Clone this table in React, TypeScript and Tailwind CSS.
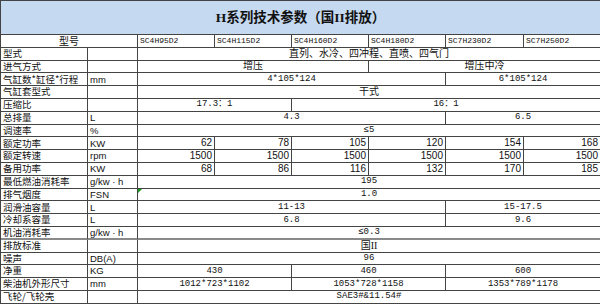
type Cell = { t: string; span: number; right?: boolean; cn?: boolean };
type Row = { label: string; unit: string; cells: Cell[]; thick?: boolean; flag?: boolean };

const MODELS = ['SC4H95D2', 'SC4H115D2', 'SC4H160D2', 'SC4H180D2', 'SC7H230D2', 'SC7H250D2'];

const each = (vals: string[]): Cell[] => vals.map((t) => ({ t, span: 1, right: true }));

const ROWS: Row[] = [
  { label: '型式', unit: '', cells: [{ t: '直列、水冷、四冲程、直喷、四气门', span: 6, cn: true }] },
  { label: '进气方式', unit: '', cells: [{ t: '增压', span: 3, cn: true }, { t: '增压中冷', span: 3, cn: true }] },
  { label: '气缸数*缸径*行程', unit: 'mm', cells: [{ t: '4*105*124', span: 4 }, { t: '6*105*124', span: 2 }] },
  { label: '气缸套型式', unit: '', cells: [{ t: '干式', span: 6, cn: true }] },
  { label: '压缩比', unit: '', cells: [{ t: '17.3：1', span: 2 }, { t: '16：1', span: 4 }] },
  { label: '总排量', unit: 'L', cells: [{ t: '4.3', span: 4 }, { t: '6.5', span: 2 }] },
  { label: '调速率', unit: '%', cells: [{ t: '≤5', span: 6 }] },
  { label: '额定功率', unit: 'KW', cells: each(['62', '78', '105', '120', '154', '168']) },
  { label: '额定转速', unit: 'rpm', cells: each(['1500', '1500', '1500', '1500', '1500', '1500']) },
  { label: '备用功率', unit: 'KW', cells: each(['68', '86', '116', '132', '170', '185']) },
  { label: '最低燃油消耗率', unit: 'g/kw · h', cells: [{ t: '195', span: 6 }] },
  { label: '排气烟度', unit: 'FSN', cells: [{ t: '1.0', span: 6 }], flag: true },
  { label: '润滑油容量', unit: 'L', cells: [{ t: '11-13', span: 4 }, { t: '15-17.5', span: 2 }] },
  { label: '冷却系容量', unit: 'L', cells: [{ t: '6.8', span: 4 }, { t: '9.6', span: 2 }] },
  { label: '机油消耗率', unit: 'g/kw · h', cells: [{ t: '≤0.3', span: 6 }], thick: true },
  { label: '排放标准', unit: '', cells: [{ t: '国II', span: 6, cn: true }] },
  { label: '噪声', unit: 'DB(A)', cells: [{ t: '96', span: 6 }] },
  { label: '净重', unit: 'KG', cells: [{ t: '430', span: 2 }, { t: '460', span: 2 }, { t: '600', span: 2 }] },
  { label: '柴油机外形尺寸', unit: 'mm', cells: [{ t: '1012*723*1102', span: 2 }, { t: '1053*728*1158', span: 2 }, { t: '1353*789*1178', span: 2 }] },
  { label: '飞轮/飞轮壳', unit: '', cells: [{ t: 'SAE3#&11.54#', span: 6 }] },
];

const SPAN: Record<number, string> = {
  1: 'col-span-1',
  2: 'col-span-2',
  3: 'col-span-3',
  4: 'col-span-4',
  6: 'col-span-6',
};

const cjk = "font-['Noto_Sans_CJK_SC',sans-serif]";
const serifCn = "font-['Liberation_Serif','Noto_Sans_CJK_SC',serif]";
const mono = "font-['Liberation_Mono','Noto_Sans_CJK_SC',monospace]";
const sans = "font-['Liberation_Sans','Noto_Sans_CJK_SC',sans-serif]";
const cell = 'flex items-center border-r border-b border-[#444] overflow-visible whitespace-nowrap leading-none';

export default function App() {
  return (
    <div className="w-[600px] h-[304px] overflow-hidden bg-white text-[#111]">
      <div className="grid grid-cols-[87px_50px_77px_77px_77px_77px_78px_77px] grid-rows-[34px_repeat(21,12.8px)] border-l border-t border-[#444]">
        <div className={`col-span-8 ${cell} justify-center bg-[#c5d9f1] ${serifCn} text-[13.5px] font-bold`}>
          H系列技术参数（国II排放）
        </div>
        <div className={`col-span-2 ${cell} justify-center text-[10px] ${cjk}`}>型号</div>
        {MODELS.map((m) => (
          <div key={m} className={`${cell} pl-[2px] text-[8px] ${mono}`}>
            {m}
          </div>
        ))}
        {ROWS.map((r) => {
          // the sheet has a heavier grey rule under 机油消耗率
          const b = r.thick ? 'border-b-2 border-b-[#8a8a8a]' : '';
          return [
            <div key={r.label + 'l'} className={`${cell} pl-[2px] text-[9.5px] ${cjk} ${b}`}>
              {r.label}
            </div>,
            <div key={r.label + 'u'} className={`${cell} pl-[2px] text-[9.5px] ${sans} ${b}`}>
              {r.unit}
            </div>,
            ...r.cells.map((c, i) => (
              <div
                key={r.label + i}
                className={`relative ${SPAN[c.span]} ${cell} ${
                  c.right
                    ? `justify-end pr-[2px] text-[10px] ${sans}`
                    : c.cn
                      ? `justify-center text-[10px] ${serifCn}`
                      : `justify-center text-[9px] ${mono}`
                } ${b}`}
              >
                {r.flag && i === 0 && (
                  <span className="absolute left-0 top-0 w-0 h-0 border-t-[4px] border-t-[#1a9a1a] border-r-[4px] border-r-transparent" />
                )}
                {c.t}
              </div>
            )),
          ];
        })}
      </div>
    </div>
  );
}
